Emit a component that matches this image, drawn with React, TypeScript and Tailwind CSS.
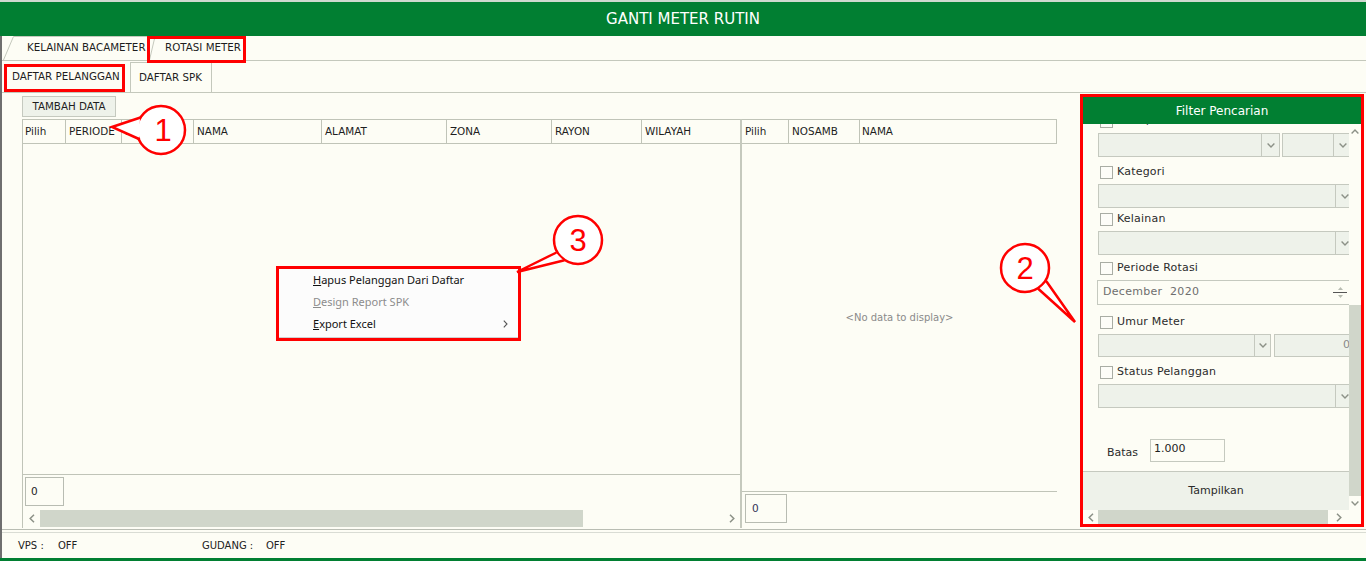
import React from "react";

function ChevDown() {
  return (
    <svg width="8" height="5" viewBox="0 0 8 5">
      <path d="M0.6 0.6 L4 4 L7.4 0.6" fill="none" stroke="#8c9187" strokeWidth="1.4" />
    </svg>
  );
}
function ChevUp() {
  return (
    <svg width="8" height="5" viewBox="0 0 8 5">
      <path d="M0.6 4.4 L4 1 L7.4 4.4" fill="none" stroke="#8c9187" strokeWidth="1.4" />
    </svg>
  );
}
function ChevLeft() {
  return (
    <svg width="6" height="9" viewBox="0 0 6 9">
      <path d="M5 0.8 L1.2 4.5 L5 8.2" fill="none" stroke="#8c9187" strokeWidth="1.5" />
    </svg>
  );
}
function ChevRight() {
  return (
    <svg width="6" height="9" viewBox="0 0 6 9">
      <path d="M1 0.8 L4.8 4.5 L1 8.2" fill="none" stroke="#8c9187" strokeWidth="1.5" />
    </svg>
  );
}

function Check({ label }: { label: string }) {
  return (
    <div className="h-[18px] shrink-0 flex items-center ml-[17px] gap-[4px]">
      <div className="w-[13px] h-[13px] shrink-0 border border-[#a9ada4] bg-[#fdfdf8]" />
      <span className="text-[11px] text-[#2b2b2b] tracking-[0.2px] whitespace-nowrap">{label}</span>
    </div>
  );
}

function WideCombo() {
  return (
    <div className="mt-[3px] ml-[15px] h-[24px] w-[256px] shrink-0 flex border border-[#c5c9bf] bg-[#eef2ea]">
      <div className="flex-1" />
      <div className="w-[18px] shrink-0 border-l border-[#c5c9bf] flex items-center justify-center">
        <ChevDown />
      </div>
    </div>
  );
}

export default function App() {
  return (
    <div className="relative w-[1366px] h-[561px] overflow-hidden bg-[#fdfdf5] flex flex-col font-['DejaVu_Sans',sans-serif] text-[#1e1e1e]">
      <div className="h-[2px] shrink-0 bg-[#cfd9cf]" />
      <div className="h-[34px] shrink-0 bg-[#017f32] flex items-center justify-center text-white text-[15px]">
        GANTI METER RUTIN
      </div>

      <div className="flex-1 min-h-0 flex flex-col border-l-2 border-[#6f6f6f]">
        {/* tab row 1 */}
        <div className="h-[25px] shrink-0 flex items-end border-b border-[#c4c8bc]">
          <div className="relative ml-[1px] h-[24px] w-[146px] flex items-center pl-[24px] text-[10.3px]">
            <svg className="absolute left-0 top-0" width="146" height="24">
              <path d="M0.5 24 L10.5 0.5 L145.5 0.5 L145.5 24" fill="none" stroke="#c4c8bc" />
            </svg>
            <span className="relative">KELAINAN BACAMETER</span>
          </div>
          <div className="relative h-[24px] w-[96px] flex items-center pl-[16px] text-[10.3px]">
            <svg className="absolute left-0 top-0" width="96" height="24">
              <path d="M0.5 24 L6 0.5 L95.5 0.5 L95.5 24" fill="none" stroke="#c4c8bc" />
            </svg>
            <span className="relative">ROTASI METER</span>
          </div>
        </div>

        {/* tab row 2 */}
        <div className="h-[32px] shrink-0 flex items-end border-b border-[#c4c8bc]">
          <div className="h-[30px] w-[127px] flex items-center pl-[10px] text-[10.3px]">DAFTAR PELANGGAN</div>
          <div className="h-[30px] w-[82px] ml-[1px] border-x border-t border-[#c4c8bc] flex items-center pl-[8px] text-[10.3px]">
            DAFTAR SPK
          </div>
        </div>

        {/* content */}
        <div className="h-[436px] shrink-0 flex">
          <div className="w-[1076px] flex flex-col pl-[20px] pt-[3px]">
            <div className="h-[21px] w-[94px] border border-[#c5c9bf] bg-[#eef2ea] flex items-center justify-center text-[10.3px]">
              TAMBAH DATA
            </div>
            <div className="mt-[2px] h-[409px] flex">
              {/* grid 1 */}
              <div className="w-[720px] flex flex-col border-l border-[#c0c4b8] border-r-2 border-r-[#c5c9bd]">
                <div className="h-[25px] shrink-0 flex border-y border-[#c0c4b8] text-[10.4px]">
                  <div className="w-[43px] border-r border-[#c0c4b8] flex items-center pl-[2px]">Pilih</div>
                  <div className="w-[56px] border-r border-[#c0c4b8] flex items-center pl-[3px]">PERIODE</div>
                  <div className="w-[72px] border-r border-[#c0c4b8] flex items-center pl-[3px]">NOSAMB</div>
                  <div className="w-[128px] border-r border-[#c0c4b8] flex items-center pl-[3px]">NAMA</div>
                  <div className="w-[125px] border-r border-[#c0c4b8] flex items-center pl-[3px]">ALAMAT</div>
                  <div className="w-[105px] border-r border-[#c0c4b8] flex items-center pl-[3px]">ZONA</div>
                  <div className="w-[90px] border-r border-[#c0c4b8] flex items-center pl-[3px]">RAYON</div>
                  <div className="flex-1 flex items-center pl-[3px]">WILAYAH</div>
                </div>
                <div className="flex-1" />
                <div className="h-[54px] shrink-0 border-t border-[#c0c4b8] flex flex-col">
                  <div className="mt-[2px] ml-[2px] h-[29px] w-[39px] border border-[#b8bcb2] flex items-center pl-[5px] text-[10.5px]">
                    0
                  </div>
                  <div className="mt-[4px] h-[17px] flex">
                    <div className="w-[17px] flex items-center justify-center">
                      <ChevLeft />
                    </div>
                    <div className="w-[543px] bg-[#d0d6ca]" />
                    <div className="flex-1" />
                    <div className="w-[17px] flex items-center justify-center">
                      <ChevRight />
                    </div>
                  </div>
                </div>
              </div>
              {/* grid 2 */}
              <div className="w-[315px] flex flex-col">
                <div className="h-[25px] shrink-0 flex border-y border-r border-[#c0c4b8] text-[10.4px]">
                  <div className="w-[47px] border-r border-[#c0c4b8] flex items-center pl-[3px]">Pilih</div>
                  <div className="w-[71px] border-r border-[#c0c4b8] flex items-center pl-[3px]">NOSAMB</div>
                  <div className="flex-1 flex items-center pl-[2px]">NAMA</div>
                </div>
                <div className="h-[347px] shrink-0 flex items-center justify-center text-[10px] text-[#8a8a8a]">
                  &lt;No data to display&gt;
                </div>
                <div className="flex-1 border-t border-[#c0c4b8]">
                  <div className="mt-[2px] ml-[3px] h-[29px] w-[42px] border border-[#b8bcb2] flex items-center pl-[6px] text-[10.5px] text-[#333355]">
                    0
                  </div>
                </div>
              </div>
            </div>
          </div>

          {/* filter panel */}
          <div className="ml-[2px] mt-[1px] w-[284px] h-[433px] border-[3px] border-[#ff0000] flex flex-col">
            <div className="relative z-10 h-[27px] shrink-0 bg-[#017f32] flex items-center justify-center text-white text-[12px]">
              Filter Pencarian
            </div>
            <div className="h-[386px] shrink-0 flex">
              <div className="w-[266px] shrink-0 overflow-hidden flex flex-col">
                <div className="-mt-[12px] flex flex-col">
                  <Check label="Area / Zona" />
                  <div className="mt-[3px] ml-[15px] h-[24px] shrink-0 flex">
                    <div className="w-[182px] shrink-0 flex border border-[#c5c9bf] bg-[#eef2ea]">
                      <div className="flex-1" />
                      <div className="w-[18px] shrink-0 border-l border-[#c5c9bf] flex items-center justify-center">
                        <ChevDown />
                      </div>
                    </div>
                    <div className="ml-[2px] w-[70px] shrink-0 flex border border-[#c5c9bf] bg-[#eef2ea]">
                      <div className="flex-1" />
                      <div className="w-[18px] shrink-0 border-l border-[#c5c9bf] flex items-center justify-center">
                        <ChevDown />
                      </div>
                    </div>
                  </div>
                  <div className="mt-[6px]">
                    <Check label="Kategori" />
                  </div>
                  <WideCombo />
                  <div className="mt-[2px]">
                    <Check label="Kelainan" />
                  </div>
                  <WideCombo />
                  <div className="mt-[4px]">
                    <Check label="Periode Rotasi" />
                  </div>
                  <div className="mt-[3px] ml-[14px] h-[25px] w-[256px] shrink-0 flex border border-[#c5c9bf] bg-[#fdfdf5]">
                    <div className="flex-1 flex items-center pl-[5px] text-[11px] text-[#6e6e6e] tracking-[0.3px]">
                      December&nbsp;&nbsp;2020
                    </div>
                    <div className="w-[16px] shrink-0 mr-[4px] flex flex-col items-center justify-center gap-[2px]">
                      <svg width="5" height="3" viewBox="0 0 5 3">
                        <path d="M0 3 L2.5 0 L5 3 Z" fill="#b8bcb2" />
                      </svg>
                      <div className="w-[14px] h-[1px] bg-[#555]" />
                      <svg width="5" height="3" viewBox="0 0 5 3">
                        <path d="M0 0 L2.5 3 L5 0 Z" fill="#b8bcb2" />
                      </svg>
                    </div>
                  </div>
                  <div className="mt-[8px]">
                    <Check label="Umur Meter" />
                  </div>
                  <div className="mt-[3px] ml-[15px] h-[23px] shrink-0 flex">
                    <div className="w-[173px] shrink-0 flex border border-[#c5c9bf] bg-[#eef2ea]">
                      <div className="flex-1" />
                      <div className="w-[16px] shrink-0 border-l border-[#c5c9bf] flex items-center justify-center">
                        <ChevDown />
                      </div>
                    </div>
                    <div className="ml-[3px] w-[80px] shrink-0 flex items-center justify-end pr-[3px] border border-[#c5c9bf] bg-[#eef2ea] text-[11px] text-[#888]">
                      0
                    </div>
                  </div>
                  <div className="mt-[6px]">
                    <Check label="Status Pelanggan" />
                  </div>
                  <WideCombo />
                  <div className="mt-[31px] h-[23px] shrink-0 flex">
                    <div className="w-[67px] pl-[24px] flex items-end pb-[1px] text-[11px] text-[#2b2b2b]">Batas</div>
                    <div className="w-[75px] border border-[#c5c9bf] bg-[#fdfdf5] pl-[3px] pt-[2px] text-[11px] leading-[14px]">
                      1.000
                    </div>
                  </div>
                  <div className="mt-[9px] h-[39px] shrink-0 border-t border-[#c5c9bf] bg-[#eef2ea] flex items-center justify-center text-[11px] text-[#2b2b2b]">
                    Tampilkan
                  </div>
                </div>
              </div>
              {/* vertical scrollbar */}
              <div className="w-[12px] flex flex-col">
                <div className="h-[14px] flex items-center justify-center">
                  <ChevUp />
                </div>
                <div className="h-[167px]" />
                <div className="flex-1 bg-[#d0d6ca]" />
                <div className="h-[14px] flex items-center justify-center">
                  <ChevDown />
                </div>
              </div>
            </div>
            <div className="flex-1 flex">
              <div className="w-[266px] flex">
                <div className="w-[15px] flex items-center justify-center">
                  <ChevLeft />
                </div>
                <div className="w-[230px] bg-[#d0d6ca]" />
                <div className="flex-1 flex items-center justify-center">
                  <ChevRight />
                </div>
              </div>
              <div className="flex-1" />
            </div>
          </div>
        </div>

        {/* status bar */}
        <div className="flex-1 border-t border-[#b9bdb3] flex flex-col">
          <div className="mt-[2px] border-t border-[#d9dcd4]" />
          <div className="flex-1 flex items-center pl-[16px] text-[10px] text-[#222]">
            <span className="w-[40px]">VPS :</span>
            <span className="w-[144px]">OFF</span>
            <span className="w-[64px]">GUDANG :</span>
            <span>OFF</span>
          </div>
        </div>
      </div>
      <div className="h-[3px] shrink-0 bg-[#017f32]" />

      {/* annotation red boxes */}
      <div className="absolute left-[147px] top-[36px] w-[99px] h-[27px] border-[3px] border-[#ff0000]" />
      <div className="absolute left-[4px] top-[64px] w-[121px] h-[28px] border-[3px] border-[#ff0000]" />

      {/* context menu */}
      <div className="absolute left-[276px] top-[266px] w-[245px] h-[75px] border-[3px] border-[#ff0000] bg-[#fcfcfc] font-['Noto_Sans',sans-serif] text-[11px]">
        <div className="h-full border-b border-[#d0d0d0] flex flex-col">
          <div className="h-[22px] flex items-center pl-[34px] text-[#111]">
            <span>
              <span className="underline">H</span>apus Pelanggan Dari Daftar
            </span>
          </div>
          <div className="h-[22px] flex items-center pl-[34px] text-[#8c8c8c]">
            <span>
              <span className="underline">D</span>esign Report SPK
            </span>
          </div>
          <div className="h-[22px] flex items-center pl-[34px] pr-[10px] text-[#111]">
            <span className="flex-1">
              <span className="underline">E</span>xport Excel
            </span>
            <svg width="5" height="8" viewBox="0 0 5 8">
              <path d="M0.8 0.6 L4 4 L0.8 7.4" fill="none" stroke="#555" strokeWidth="1.1" />
            </svg>
          </div>
        </div>
      </div>

      {/* callout bubbles */}
      <svg className="absolute left-0 top-0 pointer-events-none" width="1366" height="561">
        <g stroke="#ff0000" strokeWidth="2.5" fill="#ffffff">
          <circle cx="161" cy="130" r="24" />
          <circle cx="1025" cy="268" r="24" />
          <circle cx="578" cy="240" r="24" />
        </g>
        <g fill="#ffffff" stroke="none">
          <polygon points="112,127 140,118 139,138" />
          <polygon points="1075,322 1039,289 1047,282" />
          <polygon points="517,272 556,253 563,260" />
        </g>
        <g stroke="#ff0000" strokeWidth="2.5" fill="none" strokeLinecap="round">
          <path d="M140.5 117.5 L112 127 L139 139" />
          <path d="M1038.5 289 L1075 322 L1046.5 281.5" />
          <path d="M555.5 253 L517 272 L563.5 260.5" />
        </g>
        <g fill="#ff0000" fontFamily="Liberation Sans, Arial, sans-serif" fontSize="31" textAnchor="middle">
          <text x="163" y="141">1</text>
          <text x="1025" y="279">2</text>
          <text x="578" y="251">3</text>
        </g>
      </svg>
    </div>
  );
}
